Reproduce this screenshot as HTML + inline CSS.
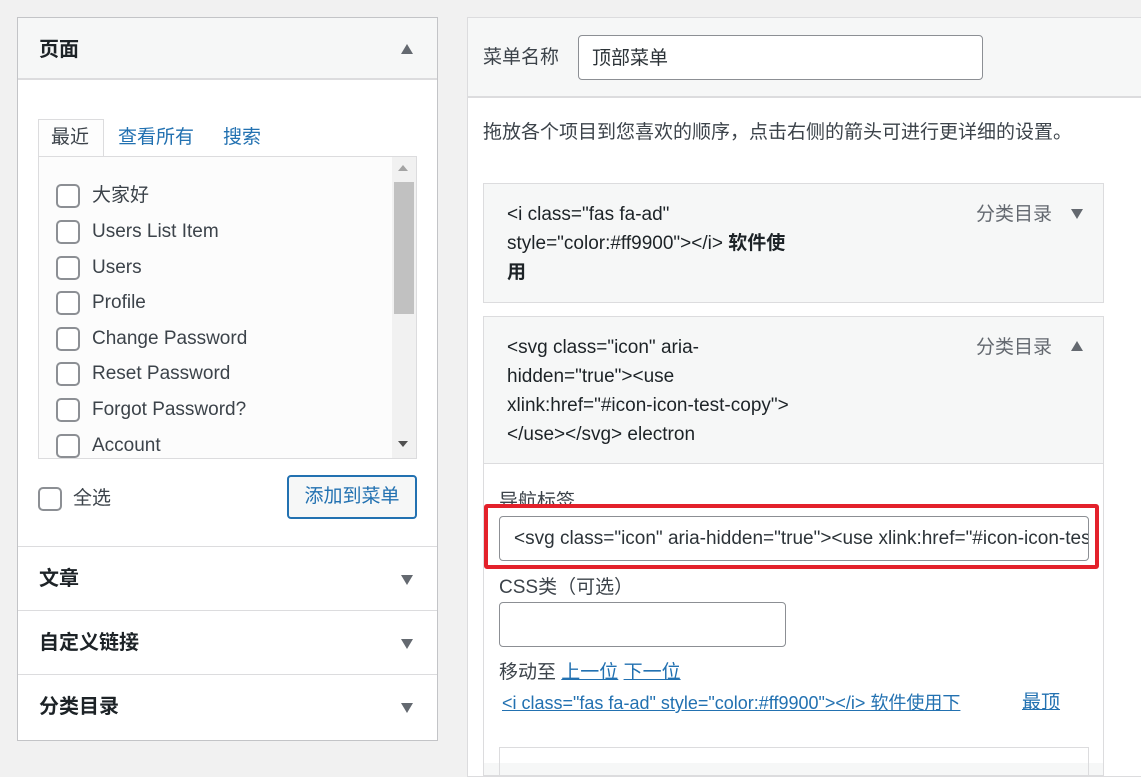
<!DOCTYPE html>
<html><head><meta charset="utf-8"><style>
*{box-sizing:border-box;margin:0;padding:0}
body{width:1141px;height:760px;overflow:hidden;background:#f1f1f1;font-family:"Liberation Sans","Noto Sans CJK SC",sans-serif;color:#3c434a;font-size:19px;position:relative}
.a{position:absolute}
.cb{position:absolute;width:24px;height:24px;border:2px solid #8c8f94;border-radius:5px;background:#fff}
.t{position:absolute;line-height:24px;white-space:nowrap}
.b{font-weight:bold;color:#1d2327;font-size:20px}
.tri{position:absolute;width:0;height:0;border-left:6px solid transparent;border-right:6px solid transparent}
.dn{border-top:10px solid #646970}
.up{border-bottom:10px solid #646970}
.lnk{color:#2271b1;text-decoration:underline}
</style></head><body>
<div class="a" style="left:17px;top:17px;width:421px;height:724px;background:#fff;border:1px solid #c3c4c7"></div>
<div class="a" style="left:18px;top:18px;width:419px;height:62px;background:#f6f7f7;border-bottom:2px solid #dcdcde"></div>
<div class="t b" style="left:39px;top:38px">页面</div>
<div class="tri up" style="left:401px;top:44px"></div>
<div class="a" style="left:38px;top:119px;width:66px;height:39px;border:1px solid #dcdcde;border-bottom:none;background:#fdfdfd"></div>
<div class="t" style="left:51px;top:126px">最近</div>
<div class="t" style="left:118px;top:126px;color:#2271b1">查看所有</div>
<div class="t" style="left:223px;top:126px;color:#2271b1">搜索</div>
<div class="a" style="left:38px;top:156px;width:379px;height:303px;border:1px solid #dcdcde;background:#fcfcfc;overflow:hidden">
 <div class="a" style="left:353px;top:0;width:24px;height:301px;background:#f1f1f1"></div>
 <div class="a" style="left:355px;top:25px;width:20px;height:132px;background:#c1c1c1"></div>
 <div class="tri" style="left:359px;top:8px;border-left-width:5px;border-right-width:5px;border-bottom:6px solid #a3a3a3"></div>
 <div class="tri" style="left:359px;top:284px;border-left-width:5px;border-right-width:5px;border-top:6px solid #505050"></div>
</div>
<div class="cb" style="left:56px;top:184px"></div><div class="t" style="left:92px;top:184px">大家好</div>
<div class="cb" style="left:56px;top:220px"></div><div class="t" style="left:92px;top:220px">Users List Item</div>
<div class="cb" style="left:56px;top:256px"></div><div class="t" style="left:92px;top:256px">Users</div>
<div class="cb" style="left:56px;top:291px"></div><div class="t" style="left:92px;top:291px">Profile</div>
<div class="cb" style="left:56px;top:327px"></div><div class="t" style="left:92px;top:327px">Change Password</div>
<div class="cb" style="left:56px;top:362px"></div><div class="t" style="left:92px;top:362px">Reset Password</div>
<div class="cb" style="left:56px;top:398px"></div><div class="t" style="left:92px;top:398px">Forgot Password?</div>
<div class="a" style="left:39px;top:434px;width:352px;height:24px;overflow:hidden"><div class="cb" style="left:17px;top:0"></div><div class="t" style="left:53px;top:0">Account</div></div>
<div class="cb" style="left:38px;top:487px"></div><div class="t" style="left:73px;top:487px">全选</div>
<div class="a" style="left:287px;top:475px;width:130px;height:44px;border:2px solid #2271b1;border-radius:4px;background:#f6f7f7;color:#2271b1;text-align:center;line-height:40px">添加到菜单</div>
<div class="a" style="left:18px;top:546px;width:419px;height:1px;background:#dcdcde"></div>
<div class="t b" style="left:39px;top:567px">文章</div><div class="tri dn" style="left:401px;top:575px"></div>
<div class="a" style="left:18px;top:610px;width:419px;height:1px;background:#dcdcde"></div>
<div class="t b" style="left:39px;top:631px">自定义链接</div><div class="tri dn" style="left:401px;top:639px"></div>
<div class="a" style="left:18px;top:674px;width:419px;height:1px;background:#dcdcde"></div>
<div class="t b" style="left:39px;top:695px">分类目录</div><div class="tri dn" style="left:401px;top:703px"></div>
<div class="a" style="left:467px;top:17px;width:690px;height:760px;background:#fff;border:1px solid #dcdcde"></div>
<div class="a" style="left:468px;top:18px;width:680px;height:80px;background:#f6f7f7;border-bottom:2px solid #dcdcde"></div>
<div class="t" style="left:483px;top:46px">菜单名称</div>
<div class="a" style="left:578px;top:35px;width:405px;height:45px;border:1px solid #8c8f94;border-radius:4px;background:#fff"></div>
<div class="t" style="left:592px;top:47px;color:#2c3338">顶部菜单</div>
<div class="t" style="left:483px;top:121px">拖放各个项目到您喜欢的顺序，点击右侧的箭头可进行更详细的设置。</div>
<div class="a" style="left:483px;top:183px;width:621px;height:120px;background:#f6f7f7;border:1px solid #dcdcde"></div>
<div class="t" style="left:507px;top:200px;line-height:29px;color:#1d2327">&lt;i class="fas fa-ad"<br>style="color:#ff9900"&gt;&lt;/i&gt; <b>软件使</b><br><b>用</b></div>
<div class="t" style="left:976px;top:203px;color:#646970">分类目录</div>
<div class="tri dn" style="left:1071px;top:209px"></div>
<div class="a" style="left:483px;top:316px;width:621px;height:460px;background:#f6f7f7;border:1px solid #dcdcde"></div>
<div class="t" style="left:507px;top:333px;line-height:29px;color:#1d2327">&lt;svg class="icon" aria-<br>hidden="true"&gt;&lt;use<br>xlink:href="#icon-icon-test-copy"&gt;<br>&lt;/use&gt;&lt;/svg&gt; electron</div>
<div class="t" style="left:976px;top:336px;color:#646970">分类目录</div>
<div class="tri up" style="left:1071px;top:341px"></div>
<div class="a" style="left:484px;top:463px;width:619px;height:300px;background:#fff;border-top:1px solid #dcdcde"></div>
<div class="t" style="left:499px;top:490px">导航标签</div>
<div class="a" style="left:484px;top:504px;width:615px;height:65px;border:4px solid #e3212b;border-radius:3px;background:#fff"></div>
<div class="a" style="left:499px;top:516px;width:590px;height:45px;border:1px solid #8c8f94;border-radius:4px;background:#fff;overflow:hidden"><div class="t" style="left:14px;top:10px;color:#2c3338">&lt;svg class="icon" aria-hidden="true"&gt;&lt;use xlink:href="#icon-icon-test-copy"&gt;</div></div>
<div class="t" style="left:499px;top:576px">CSS类（可选）</div>
<div class="a" style="left:499px;top:602px;width:287px;height:45px;border:1px solid #8c8f94;border-radius:4px;background:#fff"></div>
<div class="t" style="left:499px;top:661px">移动至 <span class="lnk">上一位</span> <span class="lnk">下一位</span></div>
<div class="t lnk" style="left:502px;top:691px;font-size:18px">&lt;i class="fas fa-ad" style="color:#ff9900"&gt;&lt;/i&gt; 软件使用下</div>
<div class="t lnk" style="left:1022px;top:691px">最顶</div>
<div class="a" style="left:499px;top:747px;width:590px;height:30px;border:1px solid #dcdcde"></div>
</body></html>
